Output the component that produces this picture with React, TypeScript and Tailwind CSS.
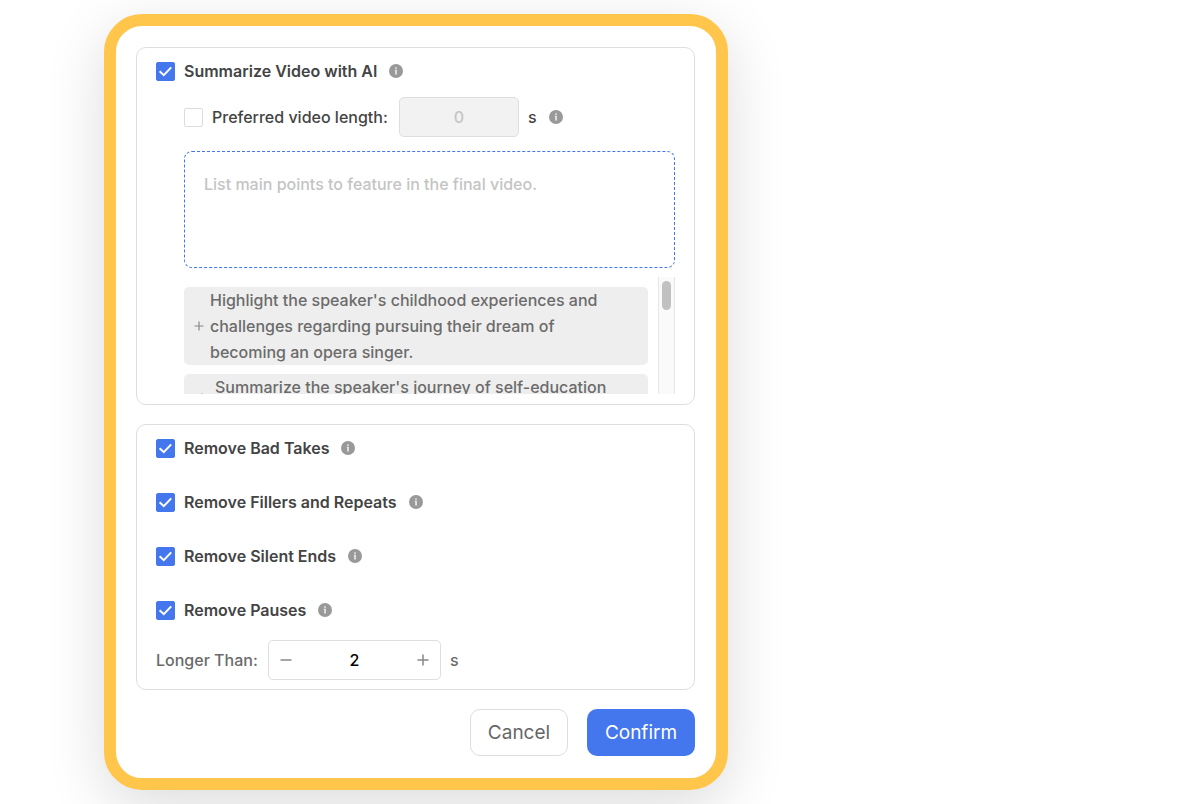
import React, { useState } from 'react';
import clsx from 'clsx';

interface CheckboxProps {
  id: string;
  checked: boolean;
  onChange: (checked: boolean) => void;
}

const Checkbox: React.FC<CheckboxProps> = ({ id, checked, onChange }) => (
  <span className="grid size-[19px] shrink-0">
    <input
      id={id}
      type="checkbox"
      checked={checked}
      onChange={(e) => onChange(e.target.checked)}
      className="peer col-start-1 row-start-1 size-[19px] appearance-none rounded-xs border border-[#dcdcdc] bg-white checked:border-[#4476ee] checked:bg-[#4476ee]"
    />
    <svg
      viewBox="0 0 19 19"
      fill="none"
      stroke="white"
      strokeWidth="2"
      className="pointer-events-none invisible col-start-1 row-start-1 size-[19px] peer-checked:visible"
    >
      <path d="M3.6 9.2 L7.8 13.2 L15.2 5.4" />
    </svg>
  </span>
);

const InfoIcon: React.FC = () => (
  <svg viewBox="0 0 14 14" className="ml-[3px] size-3.5 shrink-0">
    <circle cx="7" cy="7" r="7" fill="#999999" />
    <rect x="6.2" y="3.4" width="1.6" height="1.4" fill="#f2f2f2" />
    <path d="M5.8 5.8H7.8V10.4H6.3V6.8H5.8Z" fill="#f2f2f2" />
  </svg>
);

const PlusIcon: React.FC<{ className?: string }> = ({ className }) => (
  <svg viewBox="0 0 10 10" fill="none" stroke="currentColor" strokeWidth="1.2" className={clsx('shrink-0', className)}>
    <path d="M5 0.5V9.5M0.5 5H9.5" />
  </svg>
);

const suggestions = [
  {
    text: "Highlight the speaker's childhood experiences and challenges regarding pursuing their dream of becoming an opera singer.",
    spacing: 'gap-1.5 pl-2.5 pr-8',
  },
  {
    text: "Summarize the speaker's journey of self-education",
    spacing: 'gap-2 pl-[13px] pr-5',
  },
];

const removals = [
  { id: 'bad-takes', label: 'Remove Bad Takes' },
  { id: 'fillers', label: 'Remove Fillers and Repeats' },
  { id: 'silent-ends', label: 'Remove Silent Ends' },
  { id: 'pauses', label: 'Remove Pauses' },
];

const App: React.FC = () => {
  const [summarize, setSummarize] = useState(true);
  const [limitLength, setLimitLength] = useState(false);
  const [points, setPoints] = useState('');
  const [pause, setPause] = useState(2);
  const [enabled, setEnabled] = useState<Record<string, boolean>>({
    'bad-takes': true,
    fillers: true,
    'silent-ends': true,
    pauses: true,
  });

  return (
    <div className="overflow-hidden bg-white pt-3.5 pb-3.5 pl-[104px] font-['Inter',sans-serif] text-base leading-[26px] font-medium text-[#444444]">
      <main className="w-full max-w-[624px] rounded-[38px] border-12 border-[#ffc64b] bg-white pt-[21px] pr-[21px] pb-[22px] pl-5 shadow-[0_16px_60px_rgba(0,0,0,0.14)]">
        <section className="rounded-[10px] border border-[#dedede] px-[19px] pt-2.5 pb-2.5">
          <div className="flex items-center gap-[9px]">
            <Checkbox id="summarize" checked={summarize} onChange={setSummarize} />
            <label htmlFor="summarize" className="font-semibold">Summarize Video with AI</label>
            <InfoIcon />
          </div>

          <div className="pl-7">
            <div className="mt-[13px] flex items-center gap-[9px]">
              <Checkbox id="limit-length" checked={limitLength} onChange={setLimitLength} />
              <label htmlFor="limit-length" className="w-[178px]">Preferred video length:</label>
              <input
                type="text"
                defaultValue="0"
                disabled={!limitLength}
                aria-label="Preferred video length in seconds"
                className="h-10 w-[120px] rounded-[5px] border border-[#dedede] bg-[#f2f2f2] text-center text-[#c4c4c4]"
              />
              <span>s</span>
              <InfoIcon />
            </div>

            <textarea
              value={points}
              onChange={(e) => setPoints(e.target.value)}
              aria-label="Main points"
              placeholder="List main points to feature in the final video."
              className="mt-3.5 block h-[117px] w-full resize-none rounded-lg border border-dashed border-[#4476ee] px-[19px] py-[19px] placeholder:text-[#c4c4c4]"
            />

            <div className="mt-[9px] flex h-[117px] gap-2.5">
              <ul className="flex flex-1 flex-col gap-[9px] overflow-hidden pt-2.5">
                {suggestions.map((item) => (
                  <li key={item.text} className="shrink-0">
                    <button
                      type="button"
                      onClick={() => setPoints(item.text)}
                      className={clsx(
                        'flex min-h-12 w-full items-center rounded-[5px] bg-[#eeeeee] text-left text-[#6b6b6b]',
                        item.spacing
                      )}
                    >
                      <PlusIcon className="size-2.5 text-[#888888]" />
                      <span className="self-start">{item.text}</span>
                    </button>
                  </li>
                ))}
              </ul>
              <div className="w-[17px] border-x border-[#e6e6e6] bg-[#fafafa] px-[3px] pt-1">
                <div className="h-[29px] rounded-full bg-[#c1c1c1]" />
              </div>
            </div>
          </div>
        </section>

        <section className="mt-[19px] rounded-[10px] border border-[#dedede] px-[19px] pt-2.5 pb-[9px]">
          <div className="flex flex-col gap-7">
            {removals.map(({ id, label }) => (
              <div key={id} className="flex items-center gap-[9px]">
                <Checkbox
                  id={id}
                  checked={enabled[id]}
                  onChange={(checked) => setEnabled({ ...enabled, [id]: checked })}
                />
                <label htmlFor={id} className="font-semibold">{label}</label>
                <InfoIcon />
              </div>
            ))}
          </div>

          <div className="mt-[17px] flex items-center gap-[9px] text-[#6b6b6b]">
            <label htmlFor="longer-than" className="w-[103px]">Longer Than:</label>
            <div className="flex h-10 w-[173px] items-center rounded-[5px] border border-[#dedede] px-[11px] text-[#888888]">
              <button type="button" aria-label="Decrease" onClick={() => setPause(Math.max(0, pause - 1))}>
                <svg viewBox="0 0 12 12" fill="none" stroke="currentColor" strokeWidth="1.5" className="size-3">
                  <path d="M0.5 6H11.5" />
                </svg>
              </button>
              <input
                id="longer-than"
                type="text"
                value={pause}
                onChange={(e) => setPause(Number(e.target.value) || 0)}
                className="min-w-0 flex-1 text-center text-black"
              />
              <button type="button" aria-label="Increase" onClick={() => setPause(pause + 1)}>
                <svg viewBox="0 0 12 12" fill="none" stroke="currentColor" strokeWidth="1.5" className="size-3">
                  <path d="M6 0.5V11.5M0.5 6H11.5" />
                </svg>
              </button>
            </div>
            <span>s</span>
          </div>
        </section>

        <div className="mt-[19px] flex justify-end gap-[19px] text-[19px] font-normal">
          <button type="button" className="h-[47px] w-[98px] rounded-[10px] border border-[#dedede] text-[#666666]">
            Cancel
          </button>
          <button type="button" className="h-[47px] w-[108px] rounded-[10px] bg-[#4476ee] text-white">
            Confirm
          </button>
        </div>
      </main>
    </div>
  );
};

export default App;
